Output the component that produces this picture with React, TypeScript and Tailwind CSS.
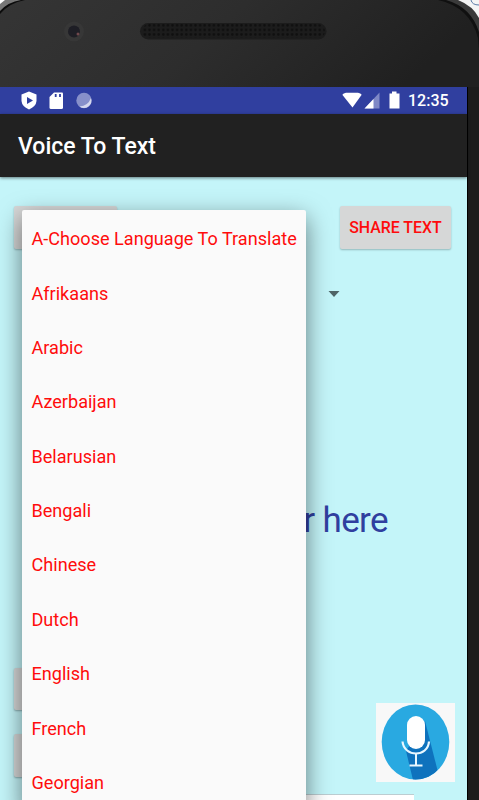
const languages = [
  'A-Choose Language To Translate',
  'Afrikaans',
  'Arabic',
  'Azerbaijan',
  'Belarusian',
  'Bengali',
  'Chinese',
  'Dutch',
  'English',
  'French',
  'Georgian',
];

function Bezel() {
  return (
    <svg className="block h-[87px] w-[479px]" viewBox="0 0 479 87">
      <defs>
        <linearGradient id="body" x1="0" y1="0" x2="1" y2="0.2">
          <stop offset="0" stopColor="#353535" />
          <stop offset="0.5" stopColor="#2d2d2d" />
          <stop offset="1" stopColor="#202020" />
        </linearGradient>
        <pattern id="mesh" width="4.6" height="4.6" patternUnits="userSpaceOnUse">
          <circle cx="2.3" cy="2.3" r="1.3" fill="#0f0f0f" />
        </pattern>
      </defs>
      <rect width="479" height="87" fill="url(#body)" />
      <path d="M0 0H25Q9 3 0 14Z" fill="#0c0c0c" />
      <path d="M0 0H21Q8 2 0 11Z" fill="#777" />
      <path d="M0 0H5L0 4Z" fill="#fff" />
      <path d="M438 0Q470 7 478 38L479 50V0Z" fill="#101010" />
      <path d="M446 0Q471 7 479 32V0Z" fill="#3a3a3a" />
      <path d="M458 0Q473 6 479 18V0Z" fill="#f4f4f4" />
      <path d="M471 0Q472 5 479 5" fill="none" stroke="#5879a5" />
      <circle cx="74" cy="31.5" r="10" fill="#373737" />
      <circle cx="74" cy="31.5" r="6" fill="#1e1e25" />
      <circle cx="78" cy="34" r="1.5" fill="#70484c" />
      <rect x="140" y="23" width="186.500" height="16.500" rx="8.200" fill="#1c1c1c" />
      <rect x="142" y="24" width="183" height="14" rx="7" fill="url(#mesh)" />
    </svg>
  );
}

function StatusBar() {
  return (
    <div className="flex h-[27px] items-center bg-[#303f9f] text-white">
      <svg className="h-[27px] w-[110px]" viewBox="0 0 110 27">
        <path d="M29 4.500L36.500 7.500V14Q36 19.500 29 22.500Q22 19.500 21.500 14V7.500Z" fill="#fff" />
        <path d="M27 10V17L33 13.500Z" fill="#303f9f" />
        <path d="M54 5.500H62Q63 5.500 63 6.500V20.500Q63 22 61.500 22H51Q49.500 22 49.500 20.500V10Z" fill="#fff" />
        <path d="M55.700 7V10M60 7V10" stroke="#303f9f" strokeWidth="1.800" />
        <circle cx="84" cy="13.500" r="7.700" fill="#8790ca" />
        <path d="M91 11A7.500 7.500 0 0 1 79.500 19.500Q88 19 91 11Z" fill="#d5d8ee" />
      </svg>
      <svg className="ml-auto h-[27px] w-[62px]" viewBox="0 0 62 27">
        <path d="M.5 8Q0.500 6.500 4 5.700H16Q19.500 6.500 19.500 8L10.500 20.500Z" fill="#fff" />
        <path d="M22.500 21.500L37.500 5.500V21.500Z" fill="#7f88c6" />
        <path d="M22.500 21.500L31.500 12V21.500Z" fill="#fff" />
        <path d="M47.500 6.500H50V4.500H54.500V6.500H57.500V21.500H47.500Z" fill="#fff" />
      </svg>
      <span className="mr-[18px] w-[45px] pl-[4px] text-[16px] leading-[28px] font-medium whitespace-nowrap">
        12:35
      </span>
    </div>
  );
}

function MicButton() {
  return (
    <svg className="block h-[79px] w-[79px]" viewBox="0 0 79 79">
      <defs>
        <clipPath id="disc">
          <ellipse cx="39.500" cy="39" rx="33.800" ry="37.500" />
        </clipPath>
      </defs>
      <rect width="79" height="79" fill="#f8f8f8" />
      <g clipPath="url(#disc)">
        <rect width="79" height="79" fill="#29a9e1" />
        <path d="M49 18L64 77H37L30 48Z" fill="#0e72bd" />
      </g>
      <rect x="31" y="13" width="18" height="33" rx="9" fill="#fff" />
      <path d="M26.500 38.500C28 54.500 52 54.500 53 38.500" fill="none" stroke="#e8f7ff" strokeWidth="2.200" />
      <path d="M40 51V62.500M33.500 62.500H46.500" fill="none" stroke="#e8f7ff" strokeWidth="2" />
    </svg>
  );
}

function LanguageMenu() {
  return (
    <ul className="absolute top-[123px] left-[22px] w-[284px] rounded-[2px] bg-[#fafafa] pt-[1.500px] shadow-[0_8px_24px_rgba(0,0,0,0.5)]">
      {languages.map((language) => (
        <li
          key={language}
          className="flex h-[54.400px] items-center pl-[9.500px] text-[18.100px] whitespace-nowrap text-[#ff0c0c]"
        >
          {language}
        </li>
      ))}
    </ul>
  );
}

export default function App() {
  return (
    <div className="h-[800px] w-[479px] overflow-hidden bg-[#1c1c1c] font-[Roboto,sans-serif]">
      <Bezel />
      <div className="relative flex h-[713px] w-[468px] flex-col border-r border-black">
        <StatusBar />
        <header className="z-10 flex h-[63px] items-center bg-[#212121] pt-[4px] pl-[18px] text-[23px] font-medium text-white shadow-[0_1px_3px_rgba(0,0,0,0.5)]">
          Voice To Text
        </header>
        <main className="flex flex-1 flex-col bg-[#c4f5f9]">
          <div className="flex justify-between pt-[29px] pr-4 pl-[14px]">
            <div className="h-[43px] w-[103px] rounded-[2px] bg-[#d6d7d7] shadow-[0_1px_2px_rgba(0,0,0,0.25)]" />
            <button className="h-[43px] w-[111px] rounded-[2px] bg-[#d6d7d7] pt-[1px] text-[15.900px] font-medium whitespace-nowrap text-[#ff0c0c] shadow-[0_1px_2px_rgba(0,0,0,0.25)]">
              SHARE TEXT
            </button>
          </div>
          <svg className="mt-[42px] ml-[328px] h-[6px] w-[12px]" viewBox="0 0 12 6">
            <path d="M0.500 0H11.500L6 6Z" fill="#4f6567" />
          </svg>
          <p className="mt-[202px] pr-[79px] text-right text-[35px] leading-[44px] tracking-[-0.600px] text-[#303f9f]">
            r here
          </p>
          <div className="mt-[125px] flex">
            <div className="flex flex-col gap-[24px] pl-[14px]">
              <div className="h-[42px] w-[103px] rounded-[2px] bg-[#d6d7d7] shadow-[0_1px_2px_rgba(0,0,0,0.3)]" />
              <div className="h-[43px] w-[103px] rounded-[2px] bg-[#d6d7d7] shadow-[0_1px_2px_rgba(0,0,0,0.3)]" />
            </div>
            <div className="mt-[35px] ml-auto pr-3">
              <MicButton />
            </div>
          </div>
          <div className="mt-[12px] ml-[120px] h-[6px] w-[294px] shrink-0 border-t border-[#bccdd1] bg-white" />
        </main>
        <LanguageMenu />
      </div>
    </div>
  );
}
